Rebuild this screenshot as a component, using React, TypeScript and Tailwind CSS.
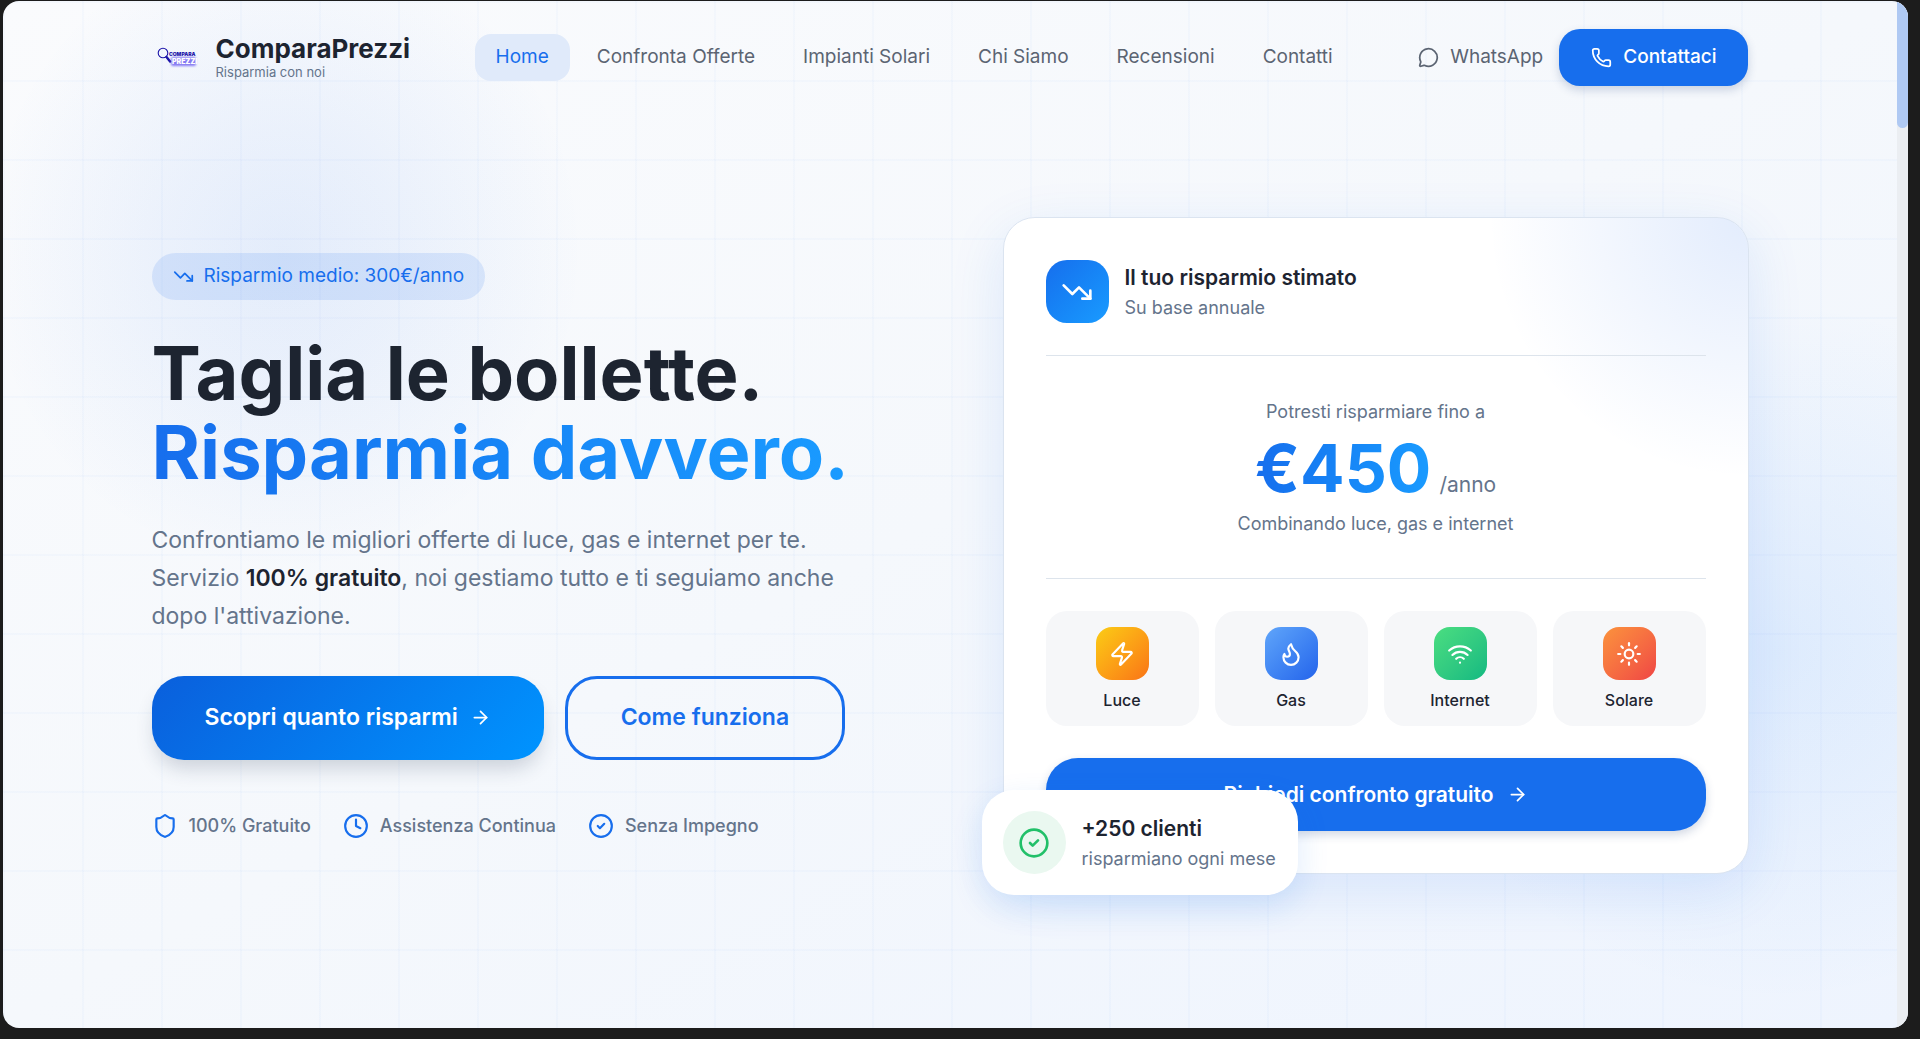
import React from 'react';
import {
  ArrowRight,
  CircleCheck,
  Clock,
  Flame,
  MessageCircle,
  Phone,
  Shield,
  Sun,
  TrendingDown,
  Wifi,
  Zap,
} from 'lucide-react';

const NAV_LINKS = ['Home', 'Confronta Offerte', 'Impianti Solari', 'Chi Siamo', 'Recensioni', 'Contatti'];

const FEATURES = [
  { label: '100% Gratuito', icon: Shield },
  { label: 'Assistenza Continua', icon: Clock },
  { label: 'Senza Impegno', icon: CircleCheck },
];

const SERVICES = [
  { label: 'Luce', icon: Zap, gradient: 'from-[#facc15] to-[#f97316]' },
  { label: 'Gas', icon: Flame, gradient: 'from-[#60a5fa] to-[#2563eb]' },
  { label: 'Internet', icon: Wifi, gradient: 'from-[#4ade80] to-[#10b981]' },
  { label: 'Solare', icon: Sun, gradient: 'from-[#fb923c] to-[#ef4444]' },
];

const LogoMark: React.FC = () => (
  <svg viewBox="0 0 52 52" className="w-[52px] h-[52px] shrink-0" aria-hidden="true">
    <defs>
      <filter id="glow" x="-30%" y="-60%" width="160%" height="220%">
        <feGaussianBlur stdDeviation="1" />
      </filter>
    </defs>
    <circle cx="11" cy="22" r="4.8" fill="none" stroke="#1a12a8" strokeWidth="1.1" />
    <path d="M14.5 26l3.6 4.6" stroke="#1a12a8" strokeWidth="2.4" strokeLinecap="round" />
    <rect x="19" y="26" width="25" height="9" rx="2" fill="#6a5cf0" opacity="0.8" filter="url(#glow)" />
    <text x="17" y="25" fontSize="5" fontWeight="900" fill="#1a12a8" className="font-['Inter',sans-serif]">
      COMPARA
    </text>
    <text x="20" y="33" fontSize="7" fontWeight="900" fill="#ffffff" className="font-['Inter',sans-serif]">
      PREZZI
    </text>
  </svg>
);

const Header: React.FC = () => (
  <header className="relative w-full max-w-[1597px] mx-auto flex items-center justify-between h-[112px]">
    <a href="#home" className="flex items-center gap-3">
      <LogoMark />
      <span className="flex flex-col">
        <span className="text-[26px] leading-[30px] font-bold text-[#1d2430]">ComparaPrezzi</span>
        <span className="text-[13px] leading-4 text-[#64748b]">Risparmia con noi</span>
      </span>
    </a>

    <nav className="flex items-center gap-[6px]">
      {NAV_LINKS.map((link, index) => (
        <a
          key={link}
          href="#"
          className={`px-[21px] h-[47px] flex items-center rounded-2xl text-[19px] ${
            index === 0 ? 'bg-[#e0eafa] text-[#176eed]' : 'text-[#5b6472]'
          }`}
        >
          {link}
        </a>
      ))}
    </nav>

    <div className="flex items-center gap-4">
      <a href="#whatsapp" className="flex items-center gap-[11px] text-[19px] text-[#5b6472]">
        <MessageCircle className="w-[21px] h-[21px]" />
        WhatsApp
      </a>
      <button className="flex items-center gap-[11px] h-[57px] px-8 rounded-[21px] bg-[#176eed] text-white text-[19px] font-medium shadow-[0_4px_10px_rgba(30,60,120,0.2)]">
        <Phone className="w-[21px] h-[21px]" />
        Contattaci
      </button>
    </div>
  </header>
);

const HeroCopy: React.FC = () => (
  <div className="flex flex-col items-start">
    <div className="flex items-center gap-[10px] h-[47px] px-[21px] rounded-full bg-[#176eed]/12 text-[#176eed] text-[19px]">
      <TrendingDown className="w-[21px] h-[21px]" />
      Risparmio medio: 300€/anno
    </div>

    <h1 className="mt-[34px] text-[74px] leading-[79px] font-bold text-[#1d2430] whitespace-nowrap">
      Taglia le bollette.
      <br />
      <span className="bg-gradient-to-r from-[#176eed] to-[#1a9bff] bg-clip-text text-transparent">
        Risparmia davvero.
      </span>
    </h1>

    <p className="mt-[29px] max-w-[706px] text-[23px] leading-[38px] text-[#64748b]">
      Confrontiamo le migliori offerte di luce, gas e internet per te. Servizio{' '}
      <strong className="font-semibold text-[#1d2430]">100% gratuito</strong>, noi gestiamo tutto e ti seguiamo anche
      dopo l'attivazione.
    </p>

    <div className="mt-[41px] flex items-center gap-[21px]">
      <button className="flex items-center gap-3 h-[84px] px-[53px] rounded-[32px] bg-linear-[135deg,#0a5fdc,#0094ff] text-white text-[23px] font-semibold shadow-[0_12px_20px_-4px_rgba(30,50,80,0.2)]">
        Scopri quanto risparmi
        <ArrowRight className="w-[21px] h-[21px]" />
      </button>
      <button className="h-[84px] px-[53px] rounded-[32px] border-3 border-[#176eed] text-[#176eed] text-[23px] font-semibold">
        Come funziona
      </button>
    </div>

    <ul className="mt-[53px] flex items-center gap-8">
      {FEATURES.map(({ label, icon: Icon }) => (
        <li key={label} className="flex items-center gap-[11px] text-[18px] leading-[26px] font-medium text-[#64748b]">
          <Icon className="w-[26px] h-[26px] text-[#176eed]" />
          {label}
        </li>
      ))}
    </ul>
  </div>
);

const SavingsCard: React.FC = () => (
  <div className="relative">
    <div className="relative overflow-hidden rounded-[32px] border border-[#dbe4f0] bg-white p-[42px] shadow-[0_16px_56px_rgba(23,110,237,0.12)]">
      <div className="absolute -top-[260px] -right-[260px] w-[520px] h-[520px] bg-[radial-gradient(closest-side,rgba(23,100,237,0.12),rgba(23,110,237,0))]" />

      <div className="relative flex items-center gap-4 pb-8 border-b border-[#dde4ec]">
        <div className="w-[63px] h-[63px] flex items-center justify-center rounded-[21px] bg-gradient-to-br from-[#176eed] to-[#1a9bff] text-white">
          <TrendingDown className="w-8 h-8" />
        </div>
        <div className="pt-[3px]">
          <h2 className="text-[21px] leading-[30px] font-semibold text-[#1d2430]">Il tuo risparmio stimato</h2>
          <p className="text-[18px] leading-[30px] text-[#64748b]">Su base annuale</p>
        </div>
      </div>

      <div className="relative pt-[42px] pb-10 text-center border-b border-[#dde4ec] text-[#64748b]">
        <p className="text-[18px] leading-[28px]">Potresti risparmiare fino a</p>
        <p className="flex items-baseline justify-center gap-2">
          <span className="text-[66px] leading-[84px] font-bold bg-gradient-to-r from-[#176eed] to-[#1a9bff] bg-clip-text text-transparent">
            €450
          </span>
          <span className="text-[21px] leading-[30px]">/anno</span>
        </p>
        <p className="text-[18px] leading-[28px]">Combinando luce, gas e internet</p>
      </div>

      <div className="mt-8 grid grid-cols-4 gap-4">
        {SERVICES.map(({ label, icon: Icon, gradient }) => (
          <div key={label} className="h-[115px] flex flex-col items-center pt-4 rounded-[21px] bg-[#f6f7f9]">
            <div className={`w-[53px] h-[53px] flex items-center justify-center rounded-2xl bg-gradient-to-br text-white ${gradient}`}>
              <Icon className="w-[26px] h-[26px]" />
            </div>
            <span className="mt-2 text-[16px] leading-6 font-medium text-[#1d2430]">{label}</span>
          </div>
        ))}
      </div>

      <button className="mt-8 w-full h-[73px] flex items-center justify-center gap-[13px] rounded-[32px] bg-[#176eed] text-white text-[21px] font-semibold shadow-[0_4px_10px_rgba(30,60,120,0.2)]">
        Richiedi confronto gratuito
        <ArrowRight className="w-[21px] h-[21px]" />
      </button>
    </div>

    <div className="absolute -left-[21px] -bottom-[21px] flex items-center gap-4 p-[21px] pr-[22px] rounded-[32px] bg-white shadow-[0_12px_32px_rgba(23,110,237,0.14)]">
      <div className="w-[63px] h-[63px] flex items-center justify-center rounded-full bg-[#eaf8f0] text-[#22c069]">
        <CircleCheck className="w-8 h-8" />
      </div>
      <div className="pt-[3px]">
        <p className="text-[21px] leading-[30px] font-semibold text-[#1d2430]">+250 clienti</p>
        <p className="text-[18px] leading-[30px] text-[#64748b]">risparmiano ogni mese</p>
      </div>
    </div>
  </div>
);

const App: React.FC = () => {
  return (
    <div className="min-h-screen flex bg-[#1c1c1c] pt-px pl-[3px] pr-3 pb-[11px] font-['Inter','Liberation_Sans',sans-serif]">
      <div className="relative flex-1 flex overflow-hidden rounded-[16px] bg-gradient-to-br from-[#fafbfd] via-[#f5f8fc] to-[#eef4fe]">
        <div className="relative flex-1 flex flex-col">
          {/* soft colour blobs and grid lines behind the content */}
          <div className="absolute inset-0 overflow-hidden">
            <div className="absolute -left-[20px] -top-[70px] w-[600px] h-[640px] bg-[radial-gradient(closest-side,rgba(20,100,235,0.09),rgba(20,100,235,0.06)_40%,rgba(20,100,235,0))]" />
            <div className="absolute -right-[240px] top-[300px] w-[720px] h-[700px] bg-[radial-gradient(closest-side,rgba(26,130,255,0.09),rgba(26,140,255,0))]" />
            <div className="absolute inset-0 bg-[linear-gradient(rgba(23,110,237,0.025)_2px,transparent_2px),linear-gradient(90deg,rgba(23,110,237,0.025)_2px,transparent_2px)] bg-[size:79px_79px]" />
          </div>

          <Header />

          <main className="relative w-full max-w-[1597px] mx-auto grid grid-cols-2 items-center gap-[105px] pt-[104px]">
            <HeroCopy />
            <SavingsCard />
          </main>
        </div>

        <div className="relative w-[11px] bg-[#ebeef2]">
          <div className="h-[127px] rounded-b-full bg-[#afc9f3]" />
        </div>
      </div>
    </div>
  );
};

export default App;
